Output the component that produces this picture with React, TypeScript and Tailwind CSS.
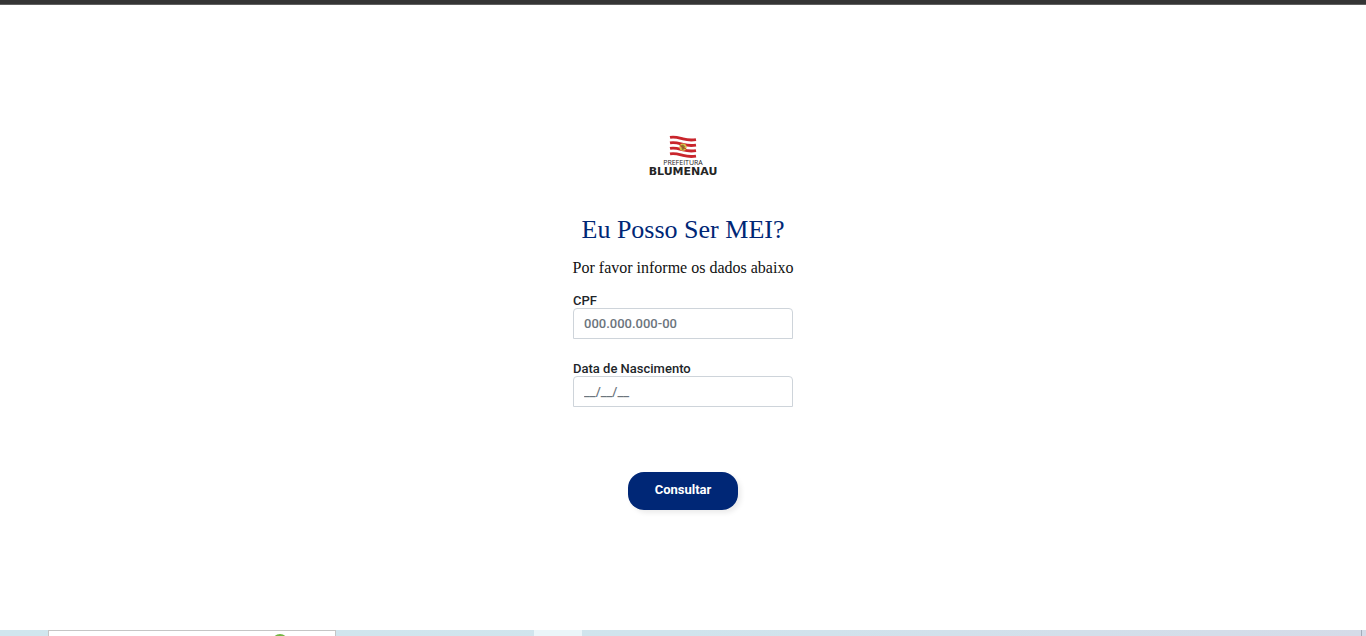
import React, { useState } from "react";

function FlagLogo() {
  return (
    <div className="flex flex-col items-center text-[#252525]">
      <svg className="h-6 w-7" viewBox="0 0 28 24" aria-hidden="true">
        <g fill="none" stroke="#c9252c" strokeWidth="2.8">
          <path d="M1 2.4C6 1.4 9 2.6 14 3.900S22 5.400 27 4.600" />
          <path d="M1 7.900C6 6.900 9 8.100 14 9.400S22 10.900 27 10.100" />
          <path d="M1 13.400C6 12.400 9 13.600 14 14.900S22 16.400 27 15.600" />
          <path d="M1 18.900C6 17.900 9 19.100 14 20.400S22 21.900 27 21.100" />
        </g>
        <ellipse cx="14" cy="12.2" rx="3.6" ry="3.6" fill="#dcc04a" />
        <path d="M12 10.500l2-1 2 2-1 3-2 .5z" fill="#8a7d31" />
        <path d="M10.800 10.600c2 .1 4 3.200 6.200 3.300" stroke="#b5342a" fill="none" />
      </svg>
      <span className="font-['Open_Sans',sans-serif] text-[7px] leading-[8px]">PREFEITURA</span>
      <span className="font-['DejaVu_Sans',sans-serif] text-[11px] leading-[9px] font-bold">BLUMENAU</span>
    </div>
  );
}

type FieldProps = {
  id: string;
  label: string;
  placeholder: string;
};

function Field({ id, label, placeholder }: FieldProps) {
  const [value, setValue] = useState("");
  return (
    <div className="flex flex-col">
      <label htmlFor={id} className="text-[13px] leading-[14px] font-medium text-[#212529]">
        {label}
      </label>
      <input
        id={id}
        value={value}
        onChange={(e) => setValue(e.target.value)}
        placeholder={placeholder}
        className="h-[31px] w-full rounded-t border border-[#ced4da] bg-white px-[10px] text-[13px] font-medium text-[#212529] outline-none placeholder:text-[#6c757d] placeholder:opacity-100"
      />
    </div>
  );
}

function Taskbar() {
  return (
    <footer className="flex h-[6px] overflow-hidden bg-linear-to-r from-[#d0e6ee] via-[#d0e4ed] to-[#d5dbe8]">
      <div className="ml-12 flex w-72 justify-end border border-b-0 border-[#c5c5c5] bg-white pr-[47px]">
        <svg className="mt-[3px] h-4 w-4" viewBox="0 0 16 16" aria-hidden="true">
          <circle cx="8" cy="8" r="8" fill="#74b543" />
        </svg>
      </div>
      <div className="ml-[198px] w-12 bg-[#ebf5f9]" />
      <div className="mr-1 ml-auto w-px bg-[#a3abb9]" />
    </footer>
  );
}

export default function App() {
  return (
    <div className="flex min-h-screen flex-col bg-white font-[Roboto,sans-serif]">
      <header className="h-[5px] border-b border-[#606060] bg-[#353535]" />
      <main className="flex grow flex-col items-center pt-[130px]">
        <FlagLogo />
        <h1 className="mt-[38px] font-['Liberation_Serif',serif] text-[26px] leading-8 text-[#002776]">
          Eu Posso Ser MEI?
        </h1>
        <p className="mt-3 font-['Liberation_Serif',serif] text-[16px] leading-5 text-[#111111]">
          Por favor informe os dados abaixo
        </p>
        <form
          className="mt-4 flex w-[220px] flex-col items-center"
          onSubmit={(e) => e.preventDefault()}
        >
          <div className="flex w-full flex-col gap-[23px]">
            <Field id="cpf" label="CPF" placeholder="000.000.000-00" />
            <Field id="nascimento" label="Data de Nascimento" placeholder="__/__/__" />
          </div>
          <button
            type="submit"
            className="mt-[65px] h-[38px] w-[110px] rounded-2xl bg-[#002776] pb-[2px] text-[13px] font-bold text-white shadow-[3px_3px_5px_rgba(0,0,0,0.08)]"
          >
            Consultar
          </button>
        </form>
      </main>
      <Taskbar />
    </div>
  );
}
